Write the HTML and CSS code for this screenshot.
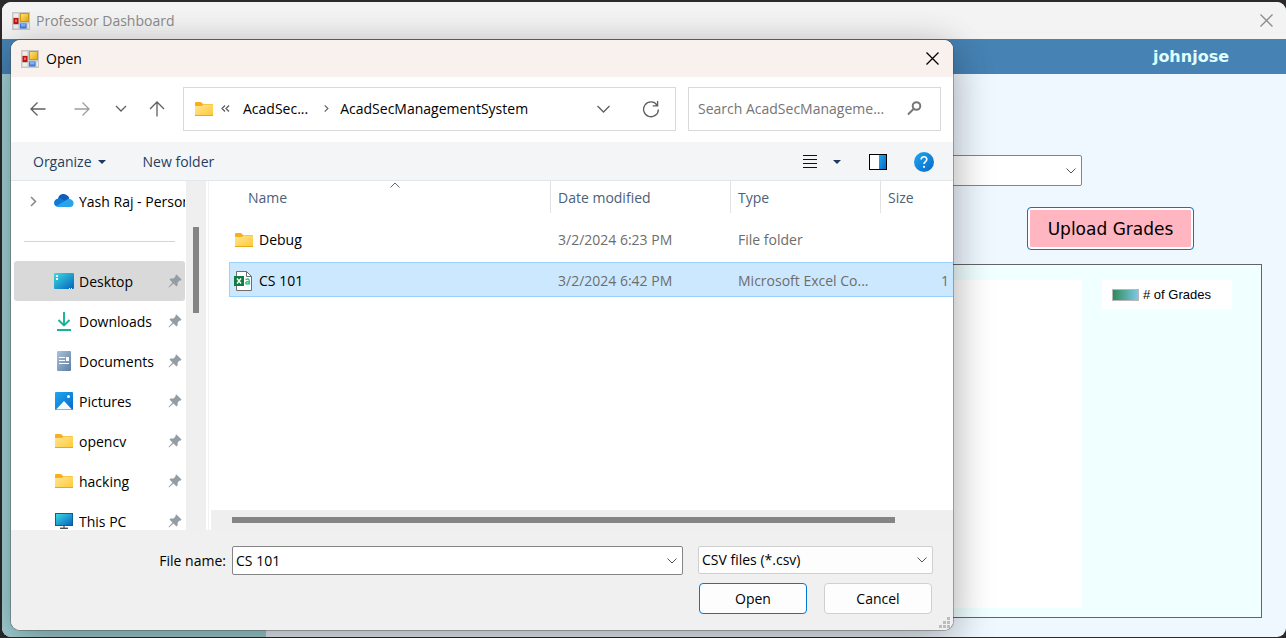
FILE: index.html
```html
<!DOCTYPE html>
<html lang="en">
<head>
<meta charset="utf-8">
<title>Professor Dashboard</title>
<link rel="stylesheet" href="styles.css">
</head>
<body>
<svg class="defs" aria-hidden="true">
  <defs>
    <linearGradient id="gFolder" x1="0" y1="0" x2="1" y2="1"><stop offset="0" stop-color="#ffe694"/><stop offset="1" stop-color="#ffc937"/></linearGradient>
    <linearGradient id="gDesk" x1="0" y1="0" x2="1" y2="1"><stop offset="0" stop-color="#3adbe2"/><stop offset="1" stop-color="#0862bd"/></linearGradient>
    <linearGradient id="gBlue" x1="0" y1="0" x2="1" y2="1"><stop offset="0" stop-color="#20a8f0"/><stop offset="1" stop-color="#0868c8"/></linearGradient>
    <linearGradient id="gDoc" x1="0" y1="0" x2="1" y2="1"><stop offset="0" stop-color="#adc2d6"/><stop offset="1" stop-color="#5b7fa5"/></linearGradient>
    <linearGradient id="gGold" x1="0" y1="0" x2="1" y2="1"><stop offset="0" stop-color="#ffe27a"/><stop offset="1" stop-color="#e5ac10"/></linearGradient>
    <symbol id="folder" viewBox="0 0 18 14"><path d="M0 1a1 1 0 0 1 1-1h5l2 2h9a1 1 0 0 1 1 1v3H0z" fill="#f7b01c"/><path d="M0 4h7l1.500-1.500H18V13a1 1 0 0 1-1 1H1a1 1 0 0 1-1-1z" fill="url(#gFolder)"/><path d="M0 13.500h18" stroke="#e8a818"/></symbol>
    <symbol id="pin" viewBox="0 0 14 14"><path d="M8.500 0.500 13.500 5.500 12.500 6.700 11.500 6.500 9.700 8.500 9.500 11.500 8.500 12.500 5.500 9.500 1 13.500 0.500 13 4.500 8.500 1.500 5.500 2.500 4.500 5.500 4.500 7.500 2.500 7.400 1.500z" fill="#929da4"/></symbol>
    <symbol id="form" viewBox="0 0 18 18"><rect width="18" height="18" fill="#c9c7c5"/><rect x="1.500" y="1.500" width="5" height="4" fill="#eee"/><rect x="1.500" y="6" width="5" height="6" fill="#c0150f"/><rect x="3" y="7.500" width="2" height="2.500" fill="#f06a58"/><rect x="1.500" y="13" width="5" height="3.500" fill="#eee"/><rect x="8" y="1" width="9" height="9" fill="#cf9a0c"/><rect x="9" y="2" width="7" height="7" fill="url(#gGold)"/><rect x="8" y="11.500" width="6.500" height="5" fill="#3b7de0"/><rect x="9" y="12" width="4.500" height="2.500" fill="#7db0f5"/><rect x="15.500" y="11.500" width="1.500" height="5" fill="#eee"/></symbol>
    <symbol id="down" viewBox="0 0 10 6"><path d="M0.500 0.500 5 5 9.500 0.500" fill="none" stroke="currentColor"/></symbol>
    <symbol id="right" viewBox="0 0 7 11"><path d="M1 1 5.500 5.500 1 10" fill="none" stroke="currentColor" stroke-width="1.600"/></symbol>
    <symbol id="cross" viewBox="0 0 13 13"><path d="M0.500 0.500 12.500 12.500M12.500 0.500 0.500 12.500" fill="none" stroke="currentColor" stroke-width="1.300"/></symbol>
  </defs>
</svg>

<div class="app">
  <header class="titlebar">
    <svg class="i18"><use href="#form"/></svg>
    <span class="title">Professor Dashboard</span>
    <button class="plain close" aria-label="Close dashboard"><svg class="i13"><use href="#cross"/></svg></button>
  </header>
  <div class="userbar">johnjose</div>
  <div class="body">
    <aside class="side"></aside>
    <main class="content">
      <div class="combo course"><select aria-label="Course"><option></option></select><svg class="chev"><use href="#down"/></svg></div>
      <button class="upload">Upload Grades</button>
      <section class="chart">
        <div class="plot"></div>
        <div class="legend"><span class="swatch"></span># of Grades</div>
      </section>
    </main>
  </div>
</div>

<div class="dialog" role="dialog" aria-label="Open">
  <header class="dlg-title">
    <svg class="i18"><use href="#form"/></svg>
    <span>Open</span>
    <button class="plain close" aria-label="Close"><svg class="i13"><use href="#cross"/></svg></button>
  </header>

  <nav class="nav">
    <div class="arrows">
      <button class="plain" aria-label="Back"><svg width="16" height="16" viewBox="0 0 16 16"><path d="M15.500 8H1M7.500 1.500 1 8l6.500 6.500" class="ln"/></svg></button>
      <button class="plain faded" aria-label="Forward"><svg width="16" height="16" viewBox="0 0 16 16"><path d="M.5 8H15M8.500 1.500 15 8l-6.500 6.500" class="ln"/></svg></button>
      <button class="plain" aria-label="Recent locations"><svg width="12" height="7" viewBox="0 0 12 7"><path d="M1 1l5 5 5-5" class="ln"/></svg></button>
      <button class="plain" aria-label="Up"><svg width="16" height="16" viewBox="0 0 16 16"><path d="M8 15.500V1M1 8l7-7 7 7" class="ln"/></svg></button>
    </div>
    <div class="address">
      <svg class="folder"><use href="#folder"/></svg>
      <svg class="back2" viewBox="0 0 9 7"><path d="M4 .5 1 3.500l3 3M8 .5 5 3.500l3 3" class="ln"/></svg>
      <button class="plain crumb">AcadSec...</button>
      <svg class="sep" viewBox="0 0 7 11"><use href="#right"/></svg>
      <button class="plain crumb">AcadSecManagementSystem</button>
      <button class="plain hist" aria-label="Previous locations"><svg width="13" height="8" viewBox="0 0 13 8"><path d="M.5 1l6 6 6-6" class="ln"/></svg></button>
      <button class="plain" aria-label="Refresh"><svg width="18" height="18" viewBox="0 0 18 18"><path d="M15 5A7.400 7.400 0 1 0 16.400 9.500M15.600 1v4.800h-4.800" class="ln"/></svg></button>
    </div>
    <div class="search">
      <input type="text" aria-label="Search" placeholder="Search AcadSecManageme...">
      <svg width="15" height="15" viewBox="0 0 15 15"><circle cx="9.500" cy="5" r="3.800" fill="none" stroke="#777" stroke-width="2"/><path d="M6.500 8 1 13.500" stroke="#777" stroke-width="2"/></svg>
    </div>
  </nav>

  <div class="tools">
    <button class="plain organize">Organize <svg width="8" height="4"><path d="M0 0h8L4 4z" fill="#1b3a5c"/></svg></button>
    <button class="plain">New folder</button>
    <div class="views">
      <button class="plain" aria-label="View"><svg width="14" height="13" viewBox="0 0 14 13"><path d="M0 .5h14M0 4.500h14M0 8.500h14M0 12.500h14" stroke="#111"/></svg></button>
      <button class="plain more" aria-label="More views"><svg width="8" height="4"><path d="M0 0h8L4 4z" fill="#1b3a5c"/></svg></button>
      <button class="plain pane" aria-label="Preview pane"><svg width="18" height="16" viewBox="0 0 18 16"><rect x=".5" y=".5" width="17" height="15" fill="#fff" stroke="#000"/><rect x="10" y="1" width="7" height="14" fill="url(#gBlue)"/></svg></button>
      <button class="plain" aria-label="Help"><svg width="20" height="20" viewBox="0 0 20 20"><circle cx="10" cy="10" r="10" fill="url(#gBlue)"/><path d="M7.200 7.500c0-3.600 5.600-3.600 5.600 0 0 2-2.800 2.100-2.800 4.500" fill="none" stroke="#fff" stroke-width="1.600"/><circle cx="10" cy="14.800" r="1.100" fill="#fff"/></svg></button>
    </div>
  </div>

  <div class="browser">
    <div class="tree">
      <div class="node drive">
        <svg class="exp" viewBox="0 0 7 11"><use href="#right"/></svg>
        <svg class="ico" width="20" height="14" viewBox="0 0 20 14"><path d="M4 6C4-1 12-2 15.500 4L11 9z" fill="#0f5fb8"/><path d="M5 13C-2 13-1 5 4.500 4.500 8 4 10 7 16 10z" fill="#0f78d8"/><path d="M2.500 12 13 5.500C20 3 22 13 16 13H5C4 13 3 12.700 2.500 12z" fill="#28a4ec"/></svg>
        <span class="label">Yash Raj - Personal</span>
      </div>
      <hr class="rule">
      <div class="node active">
        <svg class="ico" width="20" height="16" viewBox="0 0 20 16"><rect width="20" height="16" rx="1" fill="url(#gDesk)"/><path d="M2 2h2v2H2zM2 5h2v2H2zM15 15h1v1h-1zM17 15h1v1h-1z" fill="#fff"/></svg>
        <span class="label">Desktop</span><svg class="pin"><use href="#pin"/></svg>
      </div>
      <div class="node">
        <svg class="ico" width="20" height="20" viewBox="0 0 20 20"><path d="M10 1v13M4.500 9l5.500 5.500L15.500 9M3 19h14" fill="none" stroke="#18b296" stroke-width="1.900"/></svg>
        <span class="label">Downloads</span><svg class="pin"><use href="#pin"/></svg>
      </div>
      <div class="node">
        <svg class="ico" width="20" height="20" viewBox="0 0 20 20"><rect x="3" width="14" height="20" rx="1" fill="url(#gDoc)"/><path d="M5 6.500h6M5 9.500h6M5 12.500h10" stroke="#fff" stroke-width="1.200"/><rect x="12" y="6" width="3" height="4" fill="#fff"/></svg>
        <span class="label">Documents</span><svg class="pin"><use href="#pin"/></svg>
      </div>
      <div class="node">
        <svg class="ico" width="20" height="18" viewBox="0 0 20 18"><rect x="1" width="18" height="18" rx="1" fill="url(#gBlue)"/><path d="M2 17.500 10 9l8 8.500z" fill="#f2f8ff"/><circle cx="14.500" cy="4.500" r="1.500" fill="#fff"/></svg>
        <span class="label">Pictures</span><svg class="pin"><use href="#pin"/></svg>
      </div>
      <div class="node">
        <svg class="folder ico-f"><use href="#folder"/></svg>
        <span class="label">opencv</span><svg class="pin"><use href="#pin"/></svg>
      </div>
      <div class="node">
        <svg class="folder ico-f"><use href="#folder"/></svg>
        <span class="label">hacking</span><svg class="pin"><use href="#pin"/></svg>
      </div>
      <div class="node">
        <svg class="ico" width="20" height="16" viewBox="0 0 20 16"><rect x="1" width="18" height="13" fill="#0a5f96"/><rect x="2" y="1" width="16" height="11" fill="url(#gDesk)"/><path d="M9 13h2v2H9z" fill="#8a9aa5"/><path d="M6 15.300h8" stroke="#44525c" stroke-width="1.400"/></svg>
        <span class="label">This PC</span><svg class="pin"><use href="#pin"/></svg>
      </div>
    </div>
    <div class="vscroll"><div class="vthumb"></div></div>
    <div class="files">
      <div class="listing">
        <svg class="sort" viewBox="0 0 10 6"><path d="M.5 5.500 5 1l4.500 4.500" fill="none" stroke="#666"/></svg>
        <table class="list">
          <thead><tr><th class="c-name"><span>Name</span></th><th class="c-date"><span>Date modified</span></th><th class="c-type"><span>Type</span></th><th class="c-size"><span>Size</span></th></tr></thead>
          <tbody>
            <tr><td><div class="file"><svg class="folder ico-l"><use href="#folder"/></svg>Debug</div></td><td>3/2/2024 6:23 PM</td><td>File folder</td><td></td></tr>
            <tr class="sel"><td><div class="file"><svg width="19" height="20" viewBox="0 0 19 20"><path d="M2.500.5h10l5 5v14h-15z" fill="#fff" stroke="#6d6d6d"/><path d="M12.500.5v5h5" fill="none" stroke="#6d6d6d"/><rect y="5" width="10" height="10" fill="#107c41"/><path d="M3 7.500l4 5M7 7.500l-4 5" stroke="#fff" stroke-width="1.400"/><path d="M11.500 8.500c4-1.500 4 0 4 5M15.500 10.500c-4-.3-5 2.500-2.500 2.500 1.500 0 2.500-1 2.500-2" fill="none" stroke="#33c481" stroke-width="1.400"/></svg>CS 101</div></td><td>3/2/2024 6:42 PM</td><td>Microsoft Excel Co...</td><td class="num">1</td></tr>
          </tbody>
        </table>
      </div>
      <div class="hscroll"><div class="hthumb"></div></div>
    </div>
  </div>

  <footer class="foot">
    <div class="foot-row">
      <label class="fn-label" for="fname">File name:</label>
      <div class="combo fname"><input id="fname" type="text" value="CS 101"><svg class="chev"><use href="#down"/></svg></div>
      <div class="combo ftype"><select aria-label="File type"><option>CSV files (*.csv)</option></select><svg class="chev"><use href="#down"/></svg></div>
    </div>
    <div class="foot-row actions">
      <button class="btn primary">Open</button>
      <button class="btn">Cancel</button>
    </div>
    <svg class="grip" viewBox="0 0 11 11"><path d="M8 0h3v3H8zM4 4h3v3H4zM8 4h3v3H8zM0 8h3v3H0zM4 8h3v3H4zM8 8h3v3H8z" fill="#bcbcbc"/></svg>
  </footer>
</div>
</body>
</html>
```
FILE: styles.css
```css
* { box-sizing: border-box; }
body {
  margin: 0;
  height: 100vh;
  padding: 2px 0 1px 2px;
  overflow: hidden;
  background: #2b2929;
  font-family: "Open Sans", "Noto Sans", sans-serif;
  font-size: 14px;
  line-height: 20px;
  color: #000;
}
button, input, select { font: inherit; color: inherit; }
svg { display: block; flex: none; }
.defs { position: absolute; width: 0; height: 0; }
.plain { display: flex; align-items: center; border: 0; padding: 0; background: none; white-space: nowrap; }
.i18 { width: 18px; height: 18px; }
.i13 { width: 13px; height: 13px; }
.folder { width: 18px; height: 14px; }
.ln { fill: none; stroke: currentColor; stroke-width: 1.3; }

/* dashboard window */
.app { display: flex; flex-direction: column; height: 100%; border-radius: 9px; overflow: hidden; background: #f0f8ff; }
.titlebar { display: flex; align-items: center; flex: none; height: 37px; padding: 0 13px 0 10px; background: #f3f3f3; color: #8b8b8b; }
.title { margin-left: 6px; }
.close { margin-left: auto; }
.userbar {
  flex: none; height: 35px; padding: 1px 57px 0 0;
  background: #4682b4; color: #e0ffff;
  font: bold 16px/34px "DejaVu Sans", sans-serif; text-align: right;
}
.body { display: flex; flex: 1; min-height: 0; }
.side { flex: none; width: 264px; background: #a3d3d8; }
.content { display: flex; flex-direction: column; flex: 1; padding: 81px 24px 19px 20px; }
.combo { position: relative; display: flex; border: 1px solid #858585; border-radius: 2px; background: #fff; }
.combo select, .combo input { flex: 1; min-width: 0; width: 100%; border: 0; padding: 0 24px 0 3px; background: transparent; appearance: none; outline: 0; }
.chev { position: absolute; right: 5px; top: 50%; width: 10px; height: 6px; margin-top: -3px; color: #555; pointer-events: none; }
.course { align-self: flex-end; width: 400px; height: 31px; margin-right: 180px; }
.upload {
  align-self: flex-end; height: 43px; width: 167px; margin: 21px 68px 14px 0; padding: 2px 0 0;
  border: 1px solid #0078d4; border-radius: 4px;
  background: #ffb6c1; box-shadow: inset 0 0 0 2px #fff;
  font: 17px/37px "DejaVu Sans", sans-serif;
}
.chart { display: flex; flex: 1; align-items: flex-start; gap: 20px; padding: 15px 29px 9px; border: 1px solid #646464; background: #f0ffff; }
.plot { flex: 1; align-self: stretch; background: #fff; }
.legend { display: flex; align-items: center; gap: 4px; width: 130px; height: 29px; padding-left: 10px; background: #fff; font: 13px/16px "Liberation Sans", Arial, sans-serif; }
.swatch { width: 27px; height: 12px; border: 1px solid #b8b8b8; background: linear-gradient(90deg, #2e8b57, #7ec8e8); }

/* file dialog, floating over the dashboard */
.dialog {
  position: absolute; top: 40px; right: 333px; bottom: 8px; left: 11px;
  display: flex; flex-direction: column; overflow: hidden;
  border-radius: 9px; background: #fff;
  box-shadow: 0 0 0 1px rgba(70, 70, 70, .4), 0 4px 36px rgba(0, 0, 0, .16), 0 16px 44px rgba(0, 0, 0, .22);
}
.dlg-title { display: flex; align-items: center; gap: 7px; flex: none; height: 37px; padding: 0 14px 0 10px; background: #f9f1ee; }
.nav { display: flex; align-items: center; flex: none; height: 65px; padding: 0 12px 2px 19px; color: #5f5f5f; }
.arrows { display: flex; align-items: center; gap: 28px; margin-right: 18px; flex: none; }
.arrows .faded { color: #9d9d9d; }
.arrows button:nth-child(3) { margin-right: -6px; margin-left: -3px; }
.address { display: flex; align-items: center; flex: 1; min-width: 0; height: 44px; padding: 0 15px 0 11px; border: 1px solid #d9d9d9; }
.back2 { width: 9px; height: 7px; margin: 0 13px 0 8px; }
.crumb { color: #000; }
.sep { width: 7px; height: 11px; margin: 0 10px 0 15px; padding: 1px; }
.hist { margin: 0 32px 0 auto; }
.search { display: flex; align-items: center; width: 253px; height: 44px; margin-left: 12px; padding: 0 18px 0 9px; border: 1px solid #d9d9d9; }
.search input { flex: 1; min-width: 0; border: 0; padding: 0; background: none; outline: 0; }
.search input::placeholder { color: #757575; opacity: 1; }

.tools { display: flex; align-items: center; flex: none; height: 39px; padding: 1px 19px 0 22px; background: #f4f5f7; border-bottom: 1px solid #e5e6e8; color: #1f3f63; }
.organize { gap: 6px; margin-right: 37px; }
.views { display: flex; align-items: center; margin-left: auto; }
.more { margin: 0 28px 0 16px; }
.pane { margin-right: 27px; }

.browser { display: flex; flex: 1; min-height: 0; }
.tree { flex: none; width: 175px; padding: 0 1px 0 3px; overflow: hidden; }
.node { display: flex; align-items: center; height: 40px; padding: 0 3px 0 40px; border-radius: 3px; }
.drive { padding: 0 0 0 16px; }
.exp { width: 7px; height: 11px; margin-right: 17px; color: #8a8a8a; }
.active { background: #d9d9d9; }
.label { flex: 1; min-width: 0; margin-left: 5px; padding-top: 2px; overflow: hidden; white-space: nowrap; }
.ico-f { margin: 0 1px; }
.ico-l { margin-left: 1px; }
.pin { width: 14px; height: 14px; }
.rule { height: 1px; margin: 20px 10px 19px; border: 0; background: #d4d4d4; }
.vscroll { flex: none; width: 20px; padding: 46px 7px 0; background: #efefef; }
.vthumb { height: 86px; background: #858585; }
.files { display: flex; flex-direction: column; flex: 1; min-width: 0; margin-left: 2px; padding-left: 2px; border-left: 1px solid #f2f2f2; }
.listing { position: relative; flex: 1; padding-left: 18px; }
.sort { position: absolute; top: 1px; left: 179px; width: 10px; height: 6px; }
.list { width: 100%; table-layout: fixed; border-spacing: 0; color: #6d6d6d; }
.list th { height: 37px; padding: 0; font-weight: normal; text-align: left; vertical-align: top; color: #4c607a; }
.list th span { display: block; height: 32px; padding-left: 7px; line-height: 33px; border-left: 1px solid #e2e2e2; }
.list .c-name span { padding-left: 19px; border-left: 0; }
.c-date { width: 180px; }
.c-type { width: 150px; }
.c-size { width: 73px; }
.list td { height: 41px; padding: 2px 0 0 8px; border: 0 solid transparent; border-width: 3px 0; background-clip: padding-box; white-space: nowrap; }
.list td:first-child { padding-left: 5px; }
.list .num { padding-right: 4px; text-align: right; }
.file { display: flex; align-items: center; gap: 6px; color: #000; }
.sel td { background-color: #cce8ff; box-shadow: inset 0 1px #99d1ff, inset 0 -1px #99d1ff; }
.sel td:first-child { box-shadow: inset 0 1px #99d1ff, inset 0 -1px #99d1ff, inset 1px 0 #99d1ff; }
.hscroll { height: 20px; padding: 7px 58px 0 21px; background: #efefef; }
.hthumb { height: 6px; background: #858585; }

.foot { position: relative; flex: none; height: 100px; padding: 16px 20px 0 21px; background: #f0f0f0; }
.foot-row { display: flex; align-items: flex-start; }
.fn-label { flex: none; width: 200px; padding-right: 6px; line-height: 29px; text-align: right; }
.fname { flex: 1; height: 29px; }
.ftype { width: 235px; height: 28px; margin-left: 15px; border-color: #d0d0d0; background: #fdfdfd; }
.actions { justify-content: flex-end; gap: 17px; margin-top: 8px; padding-right: 1px; }
.btn { width: 108px; height: 31px; padding: 0; border: 1px solid #d0d0d0; border-radius: 4px; background: #fdfdfd; }
.primary { border-color: #0078d4; }
.grip { position: absolute; right: 3px; bottom: 2px; width: 11px; height: 11px; }
```
